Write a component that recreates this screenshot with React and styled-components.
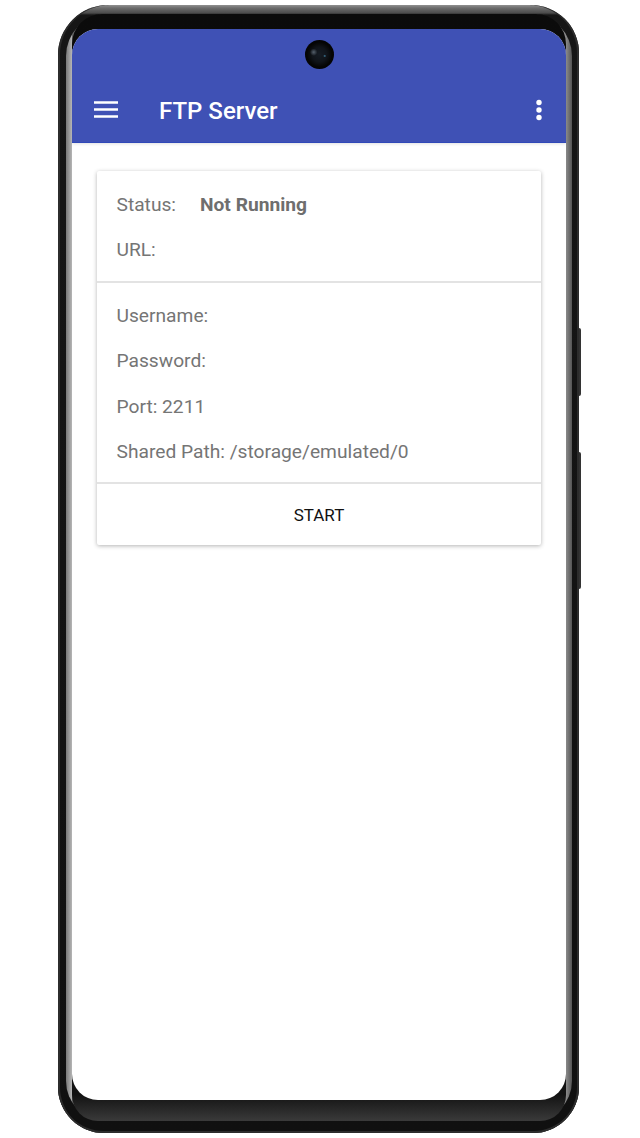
import styled, { createGlobalStyle } from "styled-components";

const GlobalStyle = createGlobalStyle`
    html, body {
        margin: 0;
        padding: 0;
        background: #fff;
        font-family: Roboto, "Liberation Sans", sans-serif;
    }
`;

const Page = styled.div`
    width: 640px;
    height: 1138px;
    padding: 5px 61px 5px 58px;
    box-sizing: border-box;
    overflow: hidden;
`;

const Phone = styled.div`
    position: relative;
    height: 1128px;
    box-sizing: border-box;
    padding: 24px 13px 33px 14px;
    display: flex;
    border-radius: 50px 48px 46px 46px;
    background: linear-gradient(180deg, #909090 0, #6c6c6c 3px, #4c4c4c 8px, #161616 10px, #101010 100%);
    box-shadow:
        inset 2px 0 0 #2c2c2c,
        inset -2px 0 0 #2c2c2c,
        inset 0 -2px 0 #2c2c2c;
`;

const SideButton = styled.div`
    position: absolute;
    right: -2px;
    top: ${(p) => p.$top}px;
    width: 2px;
    height: ${(p) => p.$height}px;
    background: #333;
    border-radius: 0 2px 2px 0;
`;

const Bezel = styled.div`
    position: absolute;
    left: 8px;
    right: 7px;
    top: 9px;
    bottom: 12px;
    border-radius: 42px 42px 40px 40px;
    background: linear-gradient(90deg, #787878 0, #b6b6b6 6px, #666 6px, #8a8a8a calc(100% - 6px), #555 100%);

    &::before {
        content: "";
        position: absolute;
        top: 0;
        bottom: 0;
        left: 6px;
        right: 6px;
        border-radius: 30px 30px 26px 26px;
        background: linear-gradient(180deg, #0b0b0b 0%, #121212 97.6%, #3a3a3a 100%);
    }
`;

const Screen = styled.div`
    position: relative;
    flex: 1;
    display: flex;
    flex-direction: column;
    background: #fff;
    border-radius: 26px;
    overflow: hidden;
`;

const Camera = styled.div`
    position: absolute;
    top: 11px;
    left: 233px;
    width: 29px;
    height: 29px;
    border-radius: 50%;
    background:
        radial-gradient(circle at 68% 55%, #3f7f9f 0, transparent 6%),
        radial-gradient(circle at 30% 42%, #55606c 0, transparent 14%),
        radial-gradient(circle at 50% 50%, #161c24 0%, #10141a 36%, #050505 60%, #000 100%);
`;

const AppBar = styled.header`
    height: 114px;
    box-sizing: border-box;
    padding: 49px 23px 0 22px;
    display: flex;
    align-items: center;
    flex-shrink: 0;
    background: #3f51b5;
    border-bottom: 1px solid #3049b8;
    box-shadow: 0 1px 3px rgba(0, 0, 0, 0.12);
    color: #fff;
`;

const Title = styled.h1`
    flex: 1;
    margin: 2px 0 0 41px;
    font-size: 24px;
    font-weight: 500;
    line-height: 32px;
`;

const IconBox = styled.svg`
    display: block;
    flex-shrink: 0;
`;

const Content = styled.main`
    padding: 28px 25px 0;
`;

const Card = styled.section`
    background: #fff;
    border-radius: 2px;
    box-shadow: 0 1px 4px rgba(0, 0, 0, 0.3);
`;

const Section = styled.div`
    padding: ${(p) => p.$pad};
    & + & {
        border-top: 2px solid #e3e3e3;
    }
`;

const Row = styled.div`
    display: flex;
    height: 45.4px;
    align-items: center;
    font-size: 19.2px;
    color: #757575;
`;

const Label = styled.span`
    width: 83.5px;
`;

const Value = styled.strong`
    font-weight: 700;
    color: #6e6e6e;
`;

const StartButton = styled.button`
    display: block;
    width: 100%;
    height: 63px;
    padding: 0;
    border: 0;
    border-top: 2px solid #e3e3e3;
    background: transparent;
    color: #111;
    font-family: inherit;
    font-size: 17px;
    font-weight: 400;
`;

export default function App() {
    return (
        <Page>
            <GlobalStyle />
            <Phone>
                <Bezel />
                <SideButton $top={323} $height={68} />
                <SideButton $top={447} $height={137} />
                <Screen>
                    <AppBar>
                        <IconBox width="24" height="18" viewBox="0 0 24 18">
                            <path d="M0 1.5h24M0 8.5h24M0 15.5h24" stroke="#fff" strokeWidth="2.6" />
                        </IconBox>
                        <Title>FTP Server</Title>
                        <IconBox width="8" height="24" viewBox="0 0 8 24">
                            <circle cx="4" cy="4.5" r="2.7" fill="#fff" />
                            <circle cx="4" cy="12" r="2.7" fill="#fff" />
                            <circle cx="4" cy="19.5" r="2.7" fill="#fff" />
                        </IconBox>
                    </AppBar>
                    <Camera />
                    <Content>
                        <Card>
                            <Section $pad="10.5px 19.5px 8.5px">
                                <Row>
                                    <Label>Status:</Label>
                                    <Value>Not Running</Value>
                                </Row>
                                <Row>URL:</Row>
                            </Section>
                            <Section $pad="10px 19.5px 8px">
                                <Row>Username:</Row>
                                <Row>Password:</Row>
                                <Row>Port: 2211</Row>
                                <Row>Shared Path: /storage/emulated/0</Row>
                            </Section>
                            <StartButton>START</StartButton>
                        </Card>
                    </Content>
                </Screen>
            </Phone>
        </Page>
    );
}
